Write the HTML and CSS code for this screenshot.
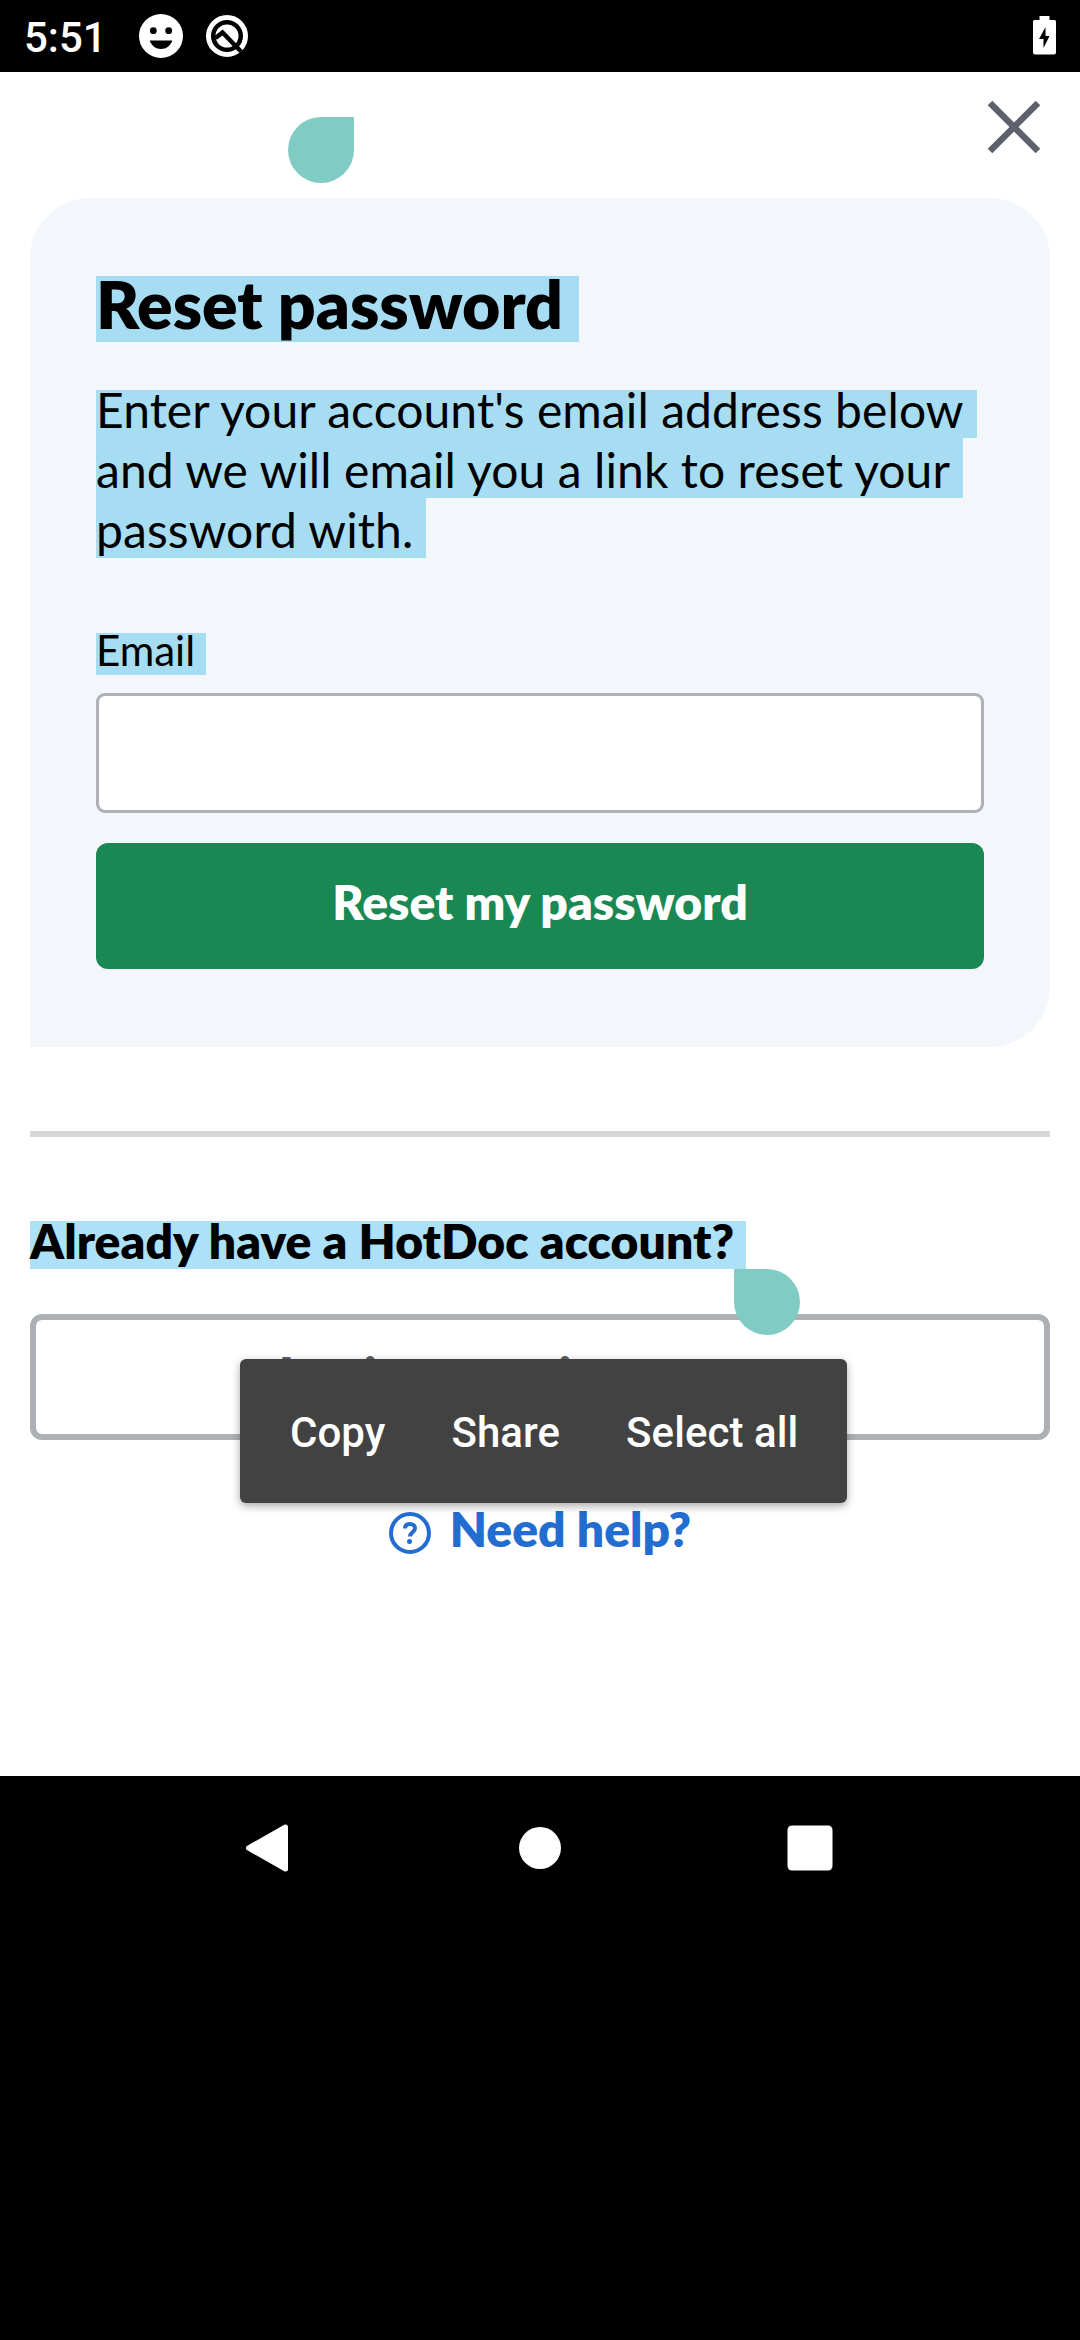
FILE: index.html
```html
<!DOCTYPE html>
<html lang="en">
<head>
<meta charset="utf-8">
<title>Reset password</title>
<link rel="stylesheet" href="styles.css">
</head>
<body>
<div class="screen">
  <header class="status">
    <span class="clock">5:51</span>
    <svg class="face" viewBox="0 0 44 44" width="44" height="44"><circle cx="22" cy="22" r="22" fill="#fff"/><circle cx="14.3" cy="16.7" r="3.4"/><circle cx="29.7" cy="16.7" r="3.4"/><path d="M10.7 26.5h22.6c-1.8 5.3-6 8.5-11.3 8.5s-9.5-3.2-11.3-8.5z"/></svg>
    <svg class="q" viewBox="0 0 44 44" width="44" height="44" fill="none"><circle cx="22" cy="22" r="18.500" stroke="#fff" stroke-width="5"/><circle cx="22" cy="22" r="11.5" fill="#fff"/><path d="M10.500 24L17.500 18.500L36 37.500" stroke="#000" stroke-width="4.500"/></svg>
    <svg class="battery" viewBox="0 0 24 40" width="24" height="40"><path d="M7.500 0h10v4h5q1.500 0 1.500 1.500v31q0 2-2 2h-19q-2 0-2-2v-31q0-1.500 1.500-1.500h5z" fill="#fff"/><path d="M13.500 11v9h4l-6 12v-9h-4.500z"/></svg>
  </header>
  <main class="page">
    <div class="topbar">
      <svg class="close" viewBox="0 0 54 54" width="54" height="54"><path d="M3 3L51 51M51 3L3 51" stroke="#5e616b" stroke-width="6.500"/></svg>
    </div>
    <section class="card">
      <h1 class="title mark">Reset password</h1>
      <p class="intro"><span class="line mark first">Enter your account's email address below</span><span class="line mark">and we will email you a link to reset your</span><span class="line mark">password with.</span></p>
      <label class="label mark" for="email">Email</label>
      <input class="field" id="email" type="email">
      <button class="submit" type="button">Reset my password</button>
    </section>
    <hr class="rule">
    <h2 class="question mark">Already have a HotDoc account?</h2>
    <button class="login" type="button">Log in to continue</button>
    <a class="help"><svg viewBox="0 0 42 42" width="42" height="42" fill="none" stroke="#226dcf" stroke-width="4"><circle cx="21" cy="21" r="19"/><path d="M16 16.500c0-3.200 2.200-4.500 5-4.500s5 1.500 5 4.200c0 4-5 4-5 8.300"/><circle cx="20.500" cy="29.500" r="2.500" fill="#226dcf" stroke="none"/></svg><span>Need help?</span></a>
    <i class="handle start"></i>
    <i class="handle end"></i>
    <div class="popup"><span>Copy</span><span>Share</span><span>Select all</span></div>
  </main>
  <nav class="nav">
    <svg viewBox="0 0 50 50" width="50" height="50"><path d="M3.500 25L40.500 4V46z" fill="#fff" stroke="#fff" stroke-width="5" stroke-linejoin="round"/></svg>
    <svg viewBox="0 0 50 50" width="50" height="50"><circle cx="25" cy="25" r="21" fill="#fff"/></svg>
    <svg viewBox="0 0 50 50" width="50" height="50"><rect x="2.500" y="2.500" width="45" height="45" rx="4.500" fill="#fff"/></svg>
  </nav>
</div>
</body>
</html>
```

FILE: styles.css
```css
* { box-sizing: border-box; margin: 0; }
body { background: #000; font-family: Lato, sans-serif; font-size: 48px; color: #000; }
.screen { display: flex; flex-direction: column; width: 1080px; height: 2340px; overflow: hidden; background: #000; }
.status { display: flex; align-items: flex-start; height: 72px; padding: 14px 24px 0; font-family: Roboto, sans-serif; color: #fff; }
.clock { width: 115px; font-size: 42px; font-weight: 500; line-height: 47px; }
.q { margin-left: 22px; }
.battery { margin: 2px 0 0 auto; }
.page { position: relative; display: flex; flex-direction: column; height: 1704px; padding: 0 30px; background: #fff; }
.topbar { display: flex; justify-content: flex-end; height: 126px; padding: 28px 9px 0; }
.card { display: flex; flex-direction: column; align-items: stretch; height: 849px; padding: 78px 66px; border-radius: 60px 60px 60px 0; background: #f3f7fc; }
.card { border-radius: 60px 60px 60px 0; }
.mark { width: fit-content; background: #a7ddf2; white-space: nowrap; }
.title { height: 66px; padding-right: 16px; font-size: 66px; font-weight: 800; line-height: 55px; }
.intro { margin-top: 48px; letter-spacing: .08px; }
.line { display: block; height: 60px; padding-right: 13px; line-height: 63px; }
.line.first { height: 48px; line-height: 39px; }
.label { height: 42px; margin-top: 75px; padding-right: 11px; font-size: 42px; line-height: 34px; }
.field { width: 100%; height: 120px; margin-top: 18px; border: 3px solid #adb1b5; border-radius: 9px; background: #fff; }
.submit { height: 126px; margin-top: 30px; padding: 0 0 10px; border: 0; border-radius: 12px; background: #1a8852; color: #fff; font: 800 48px Lato, sans-serif; }
.rule { width: 100%; height: 6px; margin: 84px 0; border: 0; background: #d7d7d7; }
.question { height: 48px; padding-right: 12px; background: #ade1f7; font-size: 48px; font-weight: 800; line-height: 39px; letter-spacing: .04px; }
.login { height: 126px; margin-top: 45px; padding: 0 0 8px 243px; border: 6px solid #adb1b6; border-radius: 12px; background: #fff; color: #5e616b; font: 800 48px Lato, sans-serif; letter-spacing: -1px; text-align: left; }
.help { display: flex; justify-content: center; gap: 19px; margin-top: 60px; color: #226dcf; font-weight: 800; line-height: 58px; }
.help svg { margin-top: 12px; }
.handle { position: absolute; width: 66px; height: 66px; background: #80cbc4; }
.start { left: 288px; top: 45px; border-radius: 33px 0 33px 33px; }
.end { left: 734px; top: 1197px; border-radius: 0 33px 33px 33px; }
.popup { position: absolute; left: 240px; top: 1287px; display: flex; gap: 66px; width: 607px; height: 144px; padding-left: 50px; border-radius: 6px; background: #424242; box-shadow: 0 3px 8px rgba(0,0,0,.35); color: #fff; font: 500 42px/148px Roboto, sans-serif; letter-spacing: .06px; white-space: nowrap; }
.nav { display: flex; justify-content: space-between; padding: 47px 245px; }
```
